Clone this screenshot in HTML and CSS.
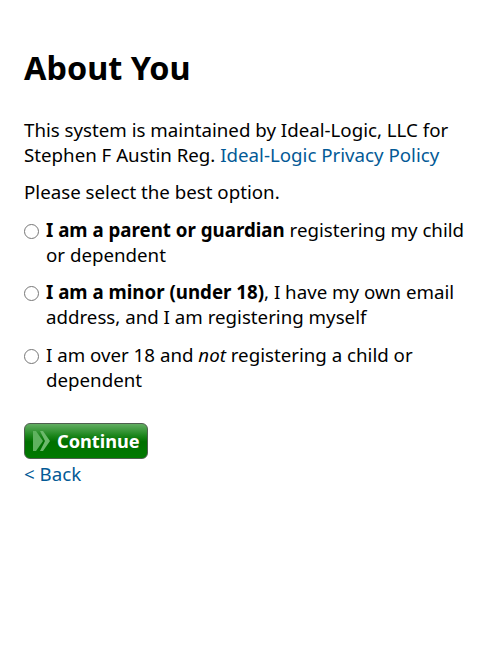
FILE: index.html
```html
<!DOCTYPE html>
<html lang="en">

<head>
  <meta charset="UTF-8">
  <title>About You</title>
  <link rel="stylesheet" href="styles.css">
</head>

<body>
  <h1 class="title">About You</h1>
  <p class="intro">This system is maintained by Ideal-Logic, LLC for Stephen F Austin Reg. <a href="#">Ideal-Logic Privacy Policy</a></p>
  <p class="prompt">Please select the best option.</p>
  <form class="options">
    <label class="option">
      <input type="radio" name="who">
      <span><b>I am a parent or guardian</b> registering my child or dependent</span>
    </label>
    <label class="option">
      <input type="radio" name="who">
      <span><b>I am a minor (under 18)</b>, I have my own email address, and I am registering myself</span>
    </label>
    <label class="option">
      <input type="radio" name="who">
      <span>I am over 18 and <i>not</i> registering a child or dependent</span>
    </label>
  </form>
  <button class="continue" type="button">
    <svg width="18" height="20" viewBox="0 0 18 20">
      <path d="M0 0h3l7 10-7 10H0z" fill="#5fb25f" />
      <path d="M7 0h3l7 10-7 10H7l5-10z" fill="#6cb96c" />
    </svg>
    Continue
  </button>
  <a class="back" href="#">&lt; Back</a>
</body>

</html>
```

FILE: styles.css
```css
* {
  margin: 0;
  padding: 0;
  box-sizing: border-box;
}

body {
  padding: 23px 24px;
  font-family: "Noto Sans", sans-serif;
  font-size: 18.72px;
  line-height: 25px;
  color: #000;
  background: #fff;
}

a {
  color: #035a96;
  text-decoration: none;
}

.title {
  font-size: 32.4px;
  line-height: 44px;
  font-weight: 700;
  margin-top: 22px;
  margin-bottom: 28px;
}

.intro {
  margin-bottom: 12px;
}

.prompt {
  margin-bottom: 13px;
}

.option {
  display: flex;
  align-items: flex-start;
  margin-bottom: 12.4px;
}

.option input {
  width: 15px;
  height: 15px;
  margin: 7px 7px 0 0;
  flex: none;
}

.continue {
  display: flex;
  align-items: center;
  gap: 7px;
  width: 124px;
  height: 36px;
  margin-top: 31px;
  padding-left: 8px;
  border: 1px solid #4f5f4f;
  border-radius: 6px;
  background: linear-gradient(#62ad62, #1a851a 35%, #007000 52%, #007a00);
  color: #fff;
  font-family: "Noto Sans", sans-serif;
  font-size: 18.2px;
  font-weight: 700;
}

.continue svg {
  margin-right: -1px;
}

.back {
  display: block;
  margin-top: 2px;
}
```
